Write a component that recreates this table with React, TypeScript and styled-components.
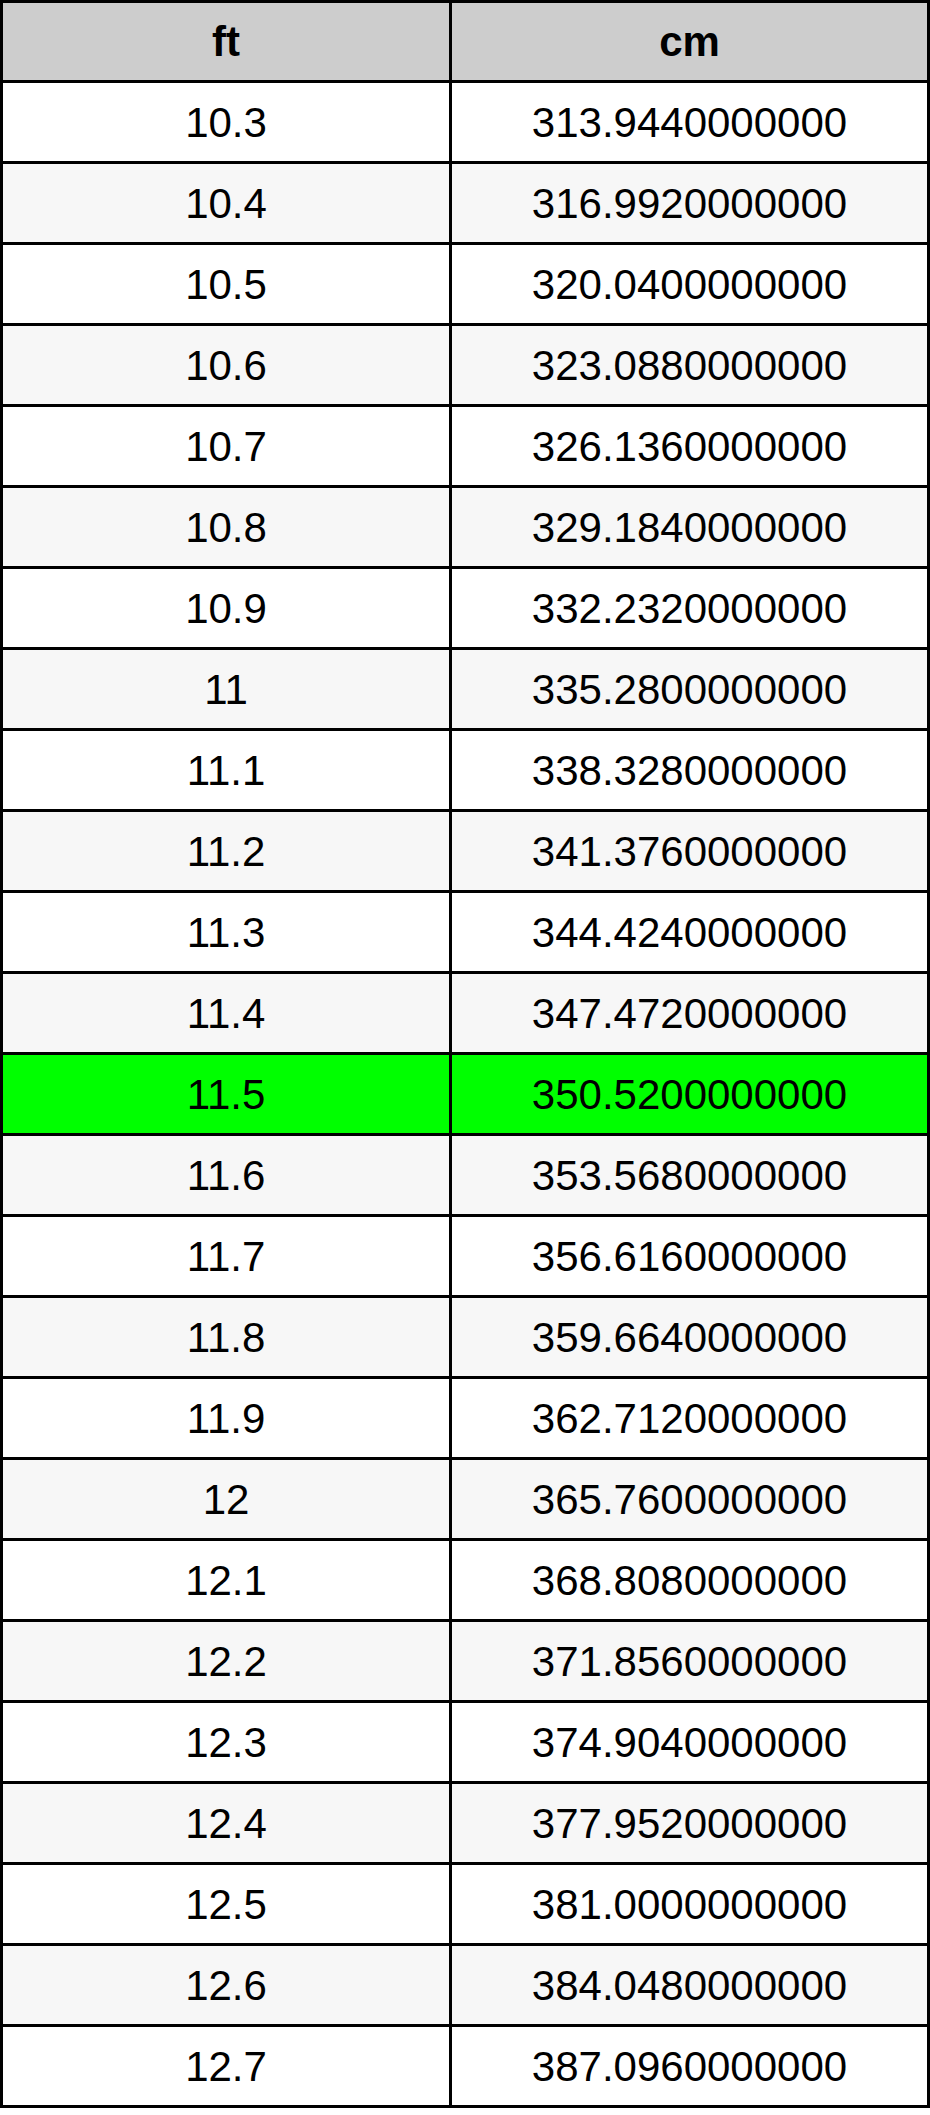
import React from 'react';
import styled, { createGlobalStyle } from 'styled-components';

const GlobalStyle = createGlobalStyle`
  html, body {
    margin: 0;
    padding: 0;
    background: #ffffff;
  }
  body {
    font-family: "Liberation Sans", Arial, sans-serif;
  }
`;

const Table = styled.div`
  width: 930px;
  display: grid;
  grid-template-columns: 449px 478px;
  border-top: 3px solid #000;
  border-left: 3px solid #000;
  box-sizing: border-box;
`;

const Cell = styled.div<{ $bg: string; $header?: boolean }>`
  height: ${p => (p.$header ? 80 : 81)}px;
  box-sizing: border-box;
  border-right: 3px solid #000;
  border-bottom: 3px solid #000;
  background: ${p => p.$bg};
  display: flex;
  align-items: center;
  justify-content: center;
  font-size: 42px;
  font-weight: ${p => (p.$header ? 700 : 400)};
  color: #000;
  padding-top: 1px;
`;

const rowBg = (i: number, highlight: boolean) => {
  if (highlight) return '#00ff00';
  return i % 2 === 0 ? '#ffffff' : '#f7f7f7';
};

const formatFt = (t: number) => (t % 10 === 0 ? String(t / 10) : (t / 10).toFixed(1));

const formatCm = (t: number) => {
  const milli = t * 3048;
  const whole = Math.floor(milli / 1000);
  const frac = String(milli % 1000).padStart(3, '0');
  return `${whole}.${frac}0000000`;
};

const rows = Array.from({ length: 25 }, (_, i) => 103 + i);

const App: React.FC = () => {
  return (
    <>
      <GlobalStyle />
      <Table>
        <Cell $bg="#cdcdcd" $header>ft</Cell>
        <Cell $bg="#cdcdcd" $header>cm</Cell>
        {rows.map((t, i) => {
          const bg = rowBg(i, t === 115);
          return (
            <React.Fragment key={t}>
              <Cell $bg={bg}>{formatFt(t)}</Cell>
              <Cell $bg={bg}>{formatCm(t)}</Cell>
            </React.Fragment>
          );
        })}
      </Table>
    </>
  );
};

export default App;
